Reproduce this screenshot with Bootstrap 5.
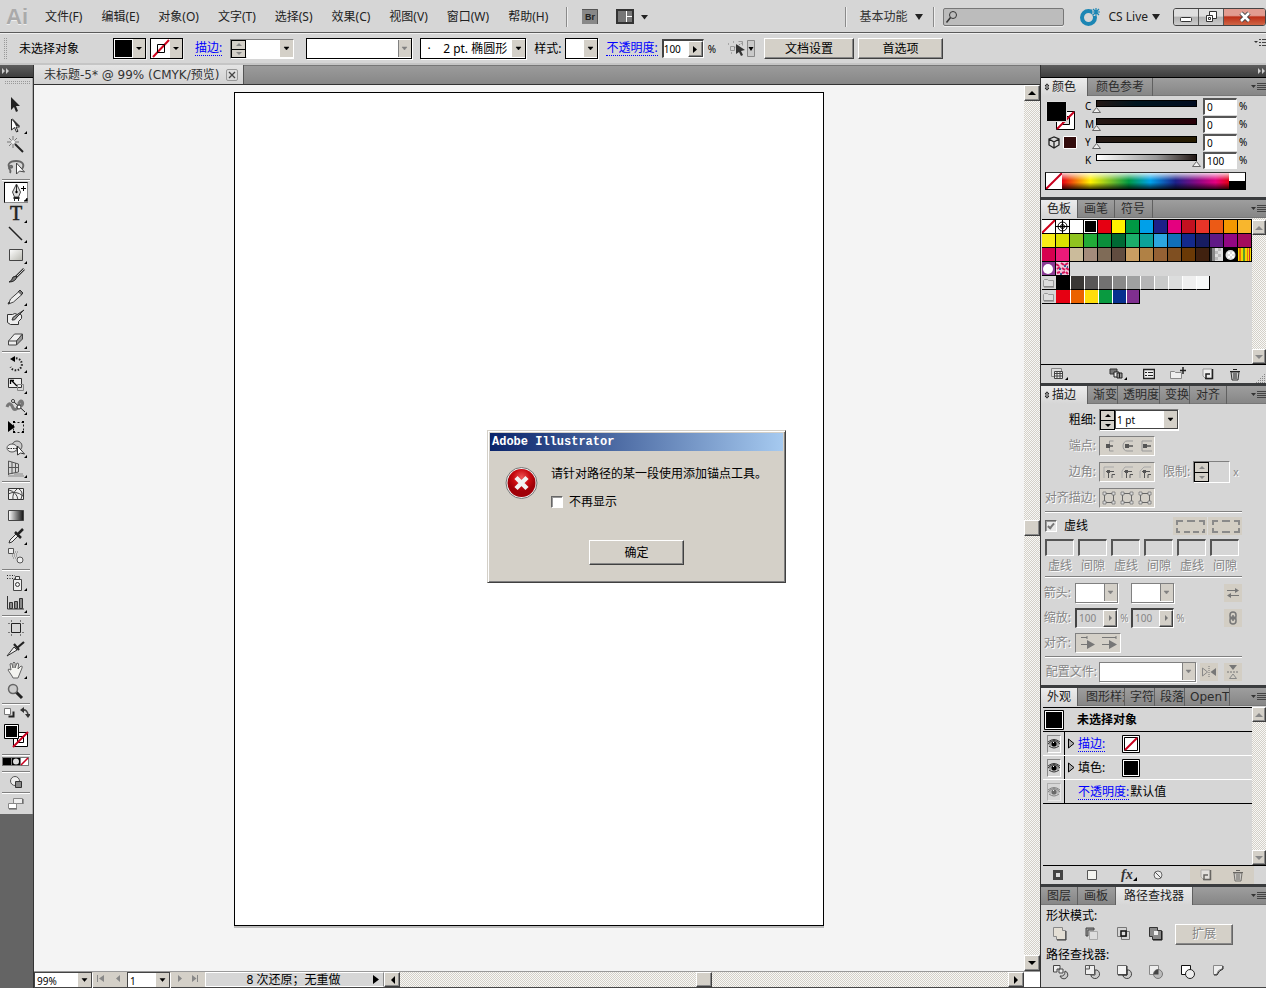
<!DOCTYPE html>
<html lang="zh-CN">
<head>
<meta charset="utf-8">
<meta name="viewport" content="width=device-width, initial-scale=1">
<title>Adobe Illustrator</title>
<link rel="stylesheet" href="https://cdn.jsdelivr.net/npm/bootstrap@5.3.0/dist/css/bootstrap.min.css">
<style>
:root{--face:#d4d0c8;--bg:#d6d6d6;--dark:#3a3c3e;
--arrow:url("data:image/svg+xml,%3Csvg xmlns='http://www.w3.org/2000/svg' width='13' height='17'%3E%3Cpath fill='%23d4d0c8' d='M0 0h13v17H0z'/%3E%3Cpath d='M4 7h5L6.500 10z' stroke='%23000' stroke-width='.5'/%3E%3C/svg%3E");
--arrow-off:url("data:image/svg+xml,%3Csvg xmlns='http://www.w3.org/2000/svg' width='13' height='17'%3E%3Cpath fill='%23d4d0c8' d='M0 0h13v17H0z'/%3E%3Cpath fill='none' stroke='%23808080' d='M.5-1v19'/%3E%3Cpath fill='%23808080' d='M4 7h5L6.500 10z' stroke='%23808080' stroke-width='.5'/%3E%3C/svg%3E")}
body{font:12px/16px "Noto Sans","Noto Sans CJK SC",sans-serif;color:#000;background:var(--bg);overflow:hidden}
svg{display:block;flex:none}
button,input,select{font:inherit;color:inherit;margin:0;padding:0;border:0;border-radius:0;background:none;min-width:0}
button{display:flex;align-items:center;justify-content:center}
.app-line{height:34px;border-bottom:1px solid #f0f0f0;box-shadow:inset 0 -1px #5a5a5a}
.menu-line a{color:#222;text-decoration:none}
.menu-line .menus{gap:19px}
.menu-line .tail{gap:14px;margin-left:18px}
.logo{width:32px;margin:0 -1px 0 6px;font:bold 22px/28px "Liberation Sans",sans-serif;color:#aaa;text-shadow:0 1px #eee}
.vsep{width:2px;height:20px;background:#8a8a8a;border-right:1px solid #eee}
.workspace{color:#333;margin-right:10px}
.live{color:#222;margin-right:13px}
.search-box{width:121px;height:18px;border:1px solid #777;border-radius:2px;background:#bcbcbc;box-shadow:0 1px #eee}
.search-box input{flex:1}
.winbtn{border:1px solid #444;border-radius:3px;height:18px;width:93px;overflow:hidden}
.winbtn button{width:25px;height:16px;background:linear-gradient(#dedede 45%,#b0b0b0 50%,#ccc);border-right:1px solid #555}
.winbtn .xclose{width:41px;border:0;background:linear-gradient(#e29c90 40%,#bd3018 50%,#cf6545)}
.ctl-line{height:31px;border-bottom:2px solid #c5c5c5;padding-left:3px}
.grip-dots{background:conic-gradient(#999 90deg,transparent 0) 0 0/2px 2px}
.ctl-line .grip-dots{width:4px;height:21px}
.ctl-line .target{margin-right:34px}
.slink,.slink:hover{color:#00f;text-decoration:none;border-bottom:1px dotted #00f;line-height:14px}
.field,.pick{border:1px solid #000;background-color:#fff;box-shadow:1px 1px #fff}
.pick{appearance:none;background-image:var(--arrow);background-repeat:no-repeat;background-position:right center}
.pick.off,.pick:disabled{background-image:var(--arrow-off);opacity:1}
.pick:disabled{border-color:#808080}
.ctl-line .pick{height:21px;border-width:1px}
.chip{width:33px;height:21px;border:1px solid #000;background:#fff;box-shadow:1px 1px #eee}
.chip svg{margin:auto}
.bevel{background:var(--face);border:1px solid;border-color:#fff #404040 #404040 #fff;box-shadow:inset -1px -1px #888;color:#000;border-radius:0}
.btn.bevel{--bs-btn-font-size:12px;--bs-btn-padding-x:0;--bs-btn-padding-y:0;line-height:16px;height:21px;justify-content:center;display:flex;--bs-btn-hover-bg:var(--face)}
.btn.bevel:disabled{opacity:1;color:#858585;text-shadow:1px 1px #fff;background:var(--face);border-color:#fff #666 #666 #fff}
.sunk{border:1px solid #808080;border-right-color:#fff;border-bottom-color:#fff}
.w33{width:33px}.w106{width:106px}.w64{width:64px}.w42{width:42px}
.small-t{font-size:10px}
.toolbox{width:34px;background:#646464;border-right:1px solid #333}
.dark-strip{height:13px;background:linear-gradient(#5e5e5e,#3e3e3e);border-bottom:1px solid #000;flex:none}
.toolset{background:var(--bg);padding:16px 0 2px;border-right:1px solid #aaa}
.toolset .grip-dots{height:4px;width:26px;margin:-13px 0 9px 4px}
.tool{width:24px;height:21px;margin-left:4px}
.tool.low{height:17px}
.tool.active{background:#fff;border:1px solid #000;border-right-color:#888;border-bottom-color:#888}
.tool.active svg{margin:-1px}
.tsep{height:4px;padding:1px 2px}
.tsep::after{content:"";display:block;height:2px;background:#808080;border-bottom:1px solid #fff}
.doc-tabs{height:20px;background:linear-gradient(#9c9c9c,#878787);border-bottom:1px solid #333;box-shadow:inset 0 1px #777}
.doc-tab{padding:0 5px 0 10px;gap:7px;background:linear-gradient(#e4e4e4,#d2d2d2);border-right:1px solid #555;color:#333;font-family:"DejaVu Sans","Noto Sans CJK SC",sans-serif}
.doc-tab button{width:12px;height:12px;border:1px solid #999;border-radius:2px}
.stage{background:#f4f4f4;padding:7px 0 45px;min-height:0}
.artboard{height:100%;aspect-ratio:590/834;border:1px solid #000;background:#fff;box-shadow:0 2px #bbb}
.track{background:repeating-conic-gradient(#f8f8f6 0 25%,#d4d0c8 0 50%) 0 0/2px 2px}
.vbar{width:16px}.vbar button{width:16px;height:16px}
.vbar.slim,.vbar.slim button{width:14px}
.docfoot{height:17px;border-bottom:1px solid #444;background:var(--face);border-top:1px solid #999}
.docfoot .pick{font-size:10px;height:16px;border:1px solid #444;padding-left:2px}
.docfoot .bevel{height:15px;width:16px}
.status{width:179px;height:15px;padding-left:10px;background:var(--bg);border:1px solid #fff;border-right-color:#888}
.dock{width:226px;border-left:1px solid #333;background:var(--bg)}
.pgroup{border-bottom:3px solid #3a3c3e}
.ptabs{height:18px;background:linear-gradient(#9e9e9e,#858585);box-shadow:inset 0 -1px #777;flex-wrap:nowrap}
.ptab{height:18px;padding:0 6px;border-right:1px solid #606060;color:#2c2c2c;white-space:nowrap;overflow:hidden;justify-content:flex-start}
.ptab.on{background:linear-gradient(#ececec,#d6d6d6);color:#222}
.ptab.cut{padding:0 0 0 5px}
.ptab.w47{width:47px;padding:0 0 0 8px}
.ptab.wide{padding-right:7px}
.ptab.lead-tab{padding:0 11px 0 3px;gap:2px}
.num{width:34px;height:17px;border:2px solid #555;border-right:1px solid #fff;border-bottom:1px solid #fff;background:#fff;padding-left:2px;font-size:10px}
.slide{appearance:none;width:109px;height:13px;background:var(--g) 5px 1px/calc(100% - 10px) 5px no-repeat,linear-gradient(#000,#000) 4px 0/calc(100% - 8px) 7px no-repeat}
.slide::-webkit-slider-thumb{appearance:none;width:9px;height:6px;margin-top:7px;background:url("data:image/svg+xml,%3Csvg xmlns='http://www.w3.org/2000/svg' width='9' height='6'%3E%3Cpath d='M.5 5.500 4.500.5l4 5z' fill='%23eee' stroke='%23666'/%3E%3C/svg%3E")}
.gc{--g:linear-gradient(90deg,#231815,#001620 40%,#000c20)}
.gm{--g:linear-gradient(90deg,#231815,#280008)}
.gy{--g:linear-gradient(90deg,#231815,#261b00)}
.gk{--g:linear-gradient(90deg,#fff,#999 60%,#231815)}
.crow{height:18px;font-size:10px;gap:2px}
.spectrum{margin:0 20px 7px 4px;height:18px;border:1px solid #000;border-top-color:#333}
.rainbow{background:linear-gradient(rgba(255,255,255,.8),transparent 45%,transparent 60%,rgba(0,0,0,.75)),linear-gradient(90deg,#e60012,#fff100 17%,#5cb531 32%,#009944 40%,#00a0e9 53%,#1d2088 68%,#920783 82%,#e4007f 92%,#e60012)}
.swatches{height:147px;border-bottom:1px solid #000}
.swgrid{padding:1px 0 0 1px}
.swgrid>:first-child{height:15px;border-top:1px solid #000}
.swrow{height:14px}
.sw{width:14px;height:14px;border:solid #000;border-width:0 1px 1px 0}
.swrow.light .sw+.sw+.sw{border-left:1px solid #fff}.swrow.light .sw:not(:last-child){border-right-width:0}
.pfoot{height:18px;padding:0 0 0 10px}
.pfoot.fx-bar{height:19px;border-top:1px solid #000;margin-left:2px}
.off-t{color:#858585;text-shadow:1px 1px #fff}
.lab{width:54px;text-align:right;white-space:nowrap}
.srow{height:26px;padding-left:1px;gap:3px}
.trow{height:25px}
.trow .lab{width:30px;margin-right:4px}
.trow .pick,.trow .sunk{width:43px;height:20px}
.trow .sunk{border-width:2px 1px 1px 2px;border-top-color:#444;border-left-color:#444}
.pct{font-size:10px;width:13px;text-align:center}
.rule{height:2px;background:#808080;border-bottom:1px solid #fff;margin:0 24px 0 4px}
.triple{width:56px;height:20px;background:var(--face);border:1px solid #808080;border-right-color:#fff;border-bottom-color:#fff}
.flatb{background:#d3cec4;width:18px;height:18px}
.flatb.last{margin-right:24px}
.spin{width:15px;height:20px;border:1px solid #000}
.spin.low{height:18px}
.spin button{height:9px;width:13px;background:var(--face);font-size:0}
.spin.low button{height:8px}
.spin button+button{border-top:1px solid #000}
.dash{width:29px;height:17px;border:2px solid #555;border-right:1px solid #fff;border-bottom:1px solid #fff}
.chk{appearance:none;width:12px;height:12px;background:#fff;border:1px solid;border-color:#666 #fff #fff #666;box-shadow:inset 1px 1px #999;position:relative}
.chk:disabled{background:#e8e8e8}
.chk:checked::after{content:"";position:absolute;left:3px;top:1px;width:4px;height:7px;border:solid #777;border-width:0 2px 2px 0;transform:rotate(40deg)}
.applist{height:158px;border-top:1px solid #000}
.ahead{height:24px;border-bottom:1px solid #000}
.arow{height:24px;border-bottom:1px solid #fff;gap:1px}
.ahead span,.arow span,.arow a{padding-top:1px}
.eye{width:22px;height:23px;border-right:1px solid #000}
.eye i{width:14px;height:18px;border:1px solid #888;border-right-color:#fff;border-bottom-color:#fff;display:flex;align-items:center}
.dialog-win{position:absolute;left:487px;top:430px;width:299px;height:153px;background:var(--face);border:1px solid;border-color:var(--face) #404040 #404040 var(--face);box-shadow:inset 1px 1px #fff,inset -1px -1px #808080;padding:2px}
.dialog-cap{height:18px;background:linear-gradient(90deg,#0a246a,#a6caf0);color:#fff;font:bold 12px/18px "Liberation Mono",monospace;padding-left:2px}
.dialog-main{padding:15px 0 0 15px;gap:12px}
</style>
</head>
<body class="d-flex flex-column vh-100">
<svg width="0" height="0" class="position-absolute" aria-hidden="true"><defs>
<symbol id="dn" viewBox="0 0 8 6"><path d="M0 0h8L4 6z"/></symbol>
<symbol id="eyeball" viewBox="0 0 12 10"><path d="M0 5q6-7 12 0-6 6-12 0z" fill="#999"/><path d="M0 5q6-7 12 0M1 7q5 4 10 0M0 3q6-5 12 0" fill="none" stroke="#333"/><circle cx="6" cy="5" r="2.500" fill="#000"/><path d="M5 3h1v1H5z" fill="#fff"/></symbol>
<symbol id="pmenu" viewBox="0 0 15 9"><path d="M0 2h5L2.500 5z" fill="#333"/><path d="M6 .5h9M6 2.500h9M6 4.500h9M6 6.500h9" stroke="#444"/></symbol>
<symbol id="ud" viewBox="0 0 6 8"><path d="M1 3 3 .8 5 3zM1 5l2 2.200L5 5z" fill="none" stroke="#222"/></symbol>
<symbol id="fold" viewBox="0 0 13 13"><path d="M1.500 10.500v-6l1-1h3l1 1h5v6z" fill="#ddd" stroke="#999"/><path d="M2 11h10" stroke="#777"/></symbol>
<symbol id="newi" viewBox="0 0 12 12"><path d="M1 1h9v10H4L1 8z" fill="#eee" stroke="#999"/><path d="M10.500 1v9.500H3M4 10V6h4" fill="none" stroke="#222" stroke-width="1.500"/></symbol>
<symbol id="bin" viewBox="0 0 12 13"><path d="M2 4h8l-1 8H3z" fill="#ccc" stroke="#333"/><path d="M1 3.500h10M4 1.500h4M5 5v6M7 5v6" stroke="#222" fill="none"/></symbol>
<linearGradient id="lg"><stop stop-color="#fff"/><stop offset="1" stop-color="#111"/></linearGradient>
<linearGradient id="lm" x2="1" y2="1"><stop stop-color="#fff"/><stop offset="1" stop-color="#b8b8b0"/></linearGradient>
<radialGradient id="rd" cy=".3"><stop stop-color="#e55"/><stop offset=".6" stop-color="#c80a10"/><stop offset="1" stop-color="#a00008"/></radialGradient>
</defs></svg>

<header class="app-line menu-line d-flex align-items-center flex-shrink-0">
  <span class="logo">Ai</span>
  <nav class="menus d-flex ms-1 ps-1">
    <a href="#">文件(F)</a><a href="#">编辑(E)</a><a href="#">对象(O)</a><a href="#">文字(T)</a><a href="#">选择(S)</a><a href="#">效果(C)</a><a href="#">视图(V)</a><a href="#">窗口(W)</a><a href="#">帮助(H)</a>
  </nav>
  <div class="tail d-flex align-items-center">
  <span class="vsep"></span>
  <button class="me-1" aria-label="Bridge"><svg width="16" height="15"><rect width="16" height="15" fill="#888"/><path d="M0 .5h15.500V15" fill="none" stroke="#555"/><text x="3" y="11" font-size="9" font-weight="bold" font-family="Liberation Sans" fill="#222">Br</text></svg></button>
  <button class="gap-1" aria-label="排列文档"><svg width="18" height="15"><path d="M1 1h16v13H1z" fill="#fff" stroke="#333" stroke-width="2"/><path d="M2 2h8v11H2zM11 2h5v5h-5zM11 8h5v5h-5z" fill="#777"/></svg><svg width="11" height="6" fill="#222"><path d="M3 1h7L6.500 5.500z"/></svg></button>
  </div>
  <div class="ms-auto d-flex align-items-center">
    <span class="vsep me-2"></span>
    <button class="workspace ms-1 gap-2">基本功能<svg width="8" height="6" fill="#222"><use href="#dn"/></svg></button>
    <span class="vsep me-2"></span>
    <label class="search-box d-flex align-items-center me-3"><svg width="16" height="16" fill="none" stroke="#333"><circle cx="9" cy="6" r="3.500"/><path d="m6.500 8.500-4 5" stroke-width="1.500"/></svg><input type="text" aria-label="搜索"></label>
    <button class="live gap-1"><svg width="20" height="20"><circle cx="8.500" cy="10.500" r="6.500" fill="none" stroke="#1c86b4" stroke-width="4"/><path d="M16 1v8M12 5h8M13 2l6 6M19 2l-6 6" stroke="#d6d6d6" stroke-width="2.500"/><path d="M16 1v8M12 5h8M13 2l6 6M19 2l-6 6" stroke="#1c86b4" stroke-width="1.200"/></svg><span class="ps-1">CS Live</span><svg width="8" height="6" fill="#222"><use href="#dn"/></svg></button>
    <div class="winbtn d-flex">
      <button aria-label="最小化"><svg width="13" height="12"><rect x=".5" y="6.500" width="11" height="4" rx="1" fill="#fff" stroke="#333"/></svg></button>
      <button aria-label="还原"><svg width="13" height="12" fill="#fff" stroke="#333"><path d="M4.500.5h7v7h-7z"/><path d="M1.500 4.500h6v6h-6zM3.500 6.500h2v2h-2z"/></svg></button>
      <button class="xclose" aria-label="关闭"><svg width="14" height="12"><path d="m3 2 8 8M11 2l-8 8" stroke="#444" stroke-width="4.500"/><path d="m3 2 8 8M11 2l-8 8" stroke="#fff" stroke-width="2.500"/></svg></button>
    </div>
  </div>
</header>

<div class="ctl-line d-flex align-items-center flex-shrink-0">
  <span class="grip-dots me-2"></span>
  <span class="target ms-1">未选择对象</span>
  <button class="chip d-flex me-1" aria-label="填色"><svg width="31" height="19"><path d="M1 1h17v17H1z"/><path d="M19 0h12v19H19z" fill="#d4d0c8"/><path d="M22 8h6l-3 3z"/></svg></button>
  <button class="chip d-flex me-2" aria-label="描边颜色"><svg width="31" height="19"><path d="M2 18 18 1" stroke="#d0021b" stroke-width="2"/><path d="M6.500 5.500h7v8h-7z" fill="none" stroke="#000"/><path d="M19 0h12v19H19z" fill="#d4d0c8"/><path d="M22 8h6l-3 3z"/></svg></button>
  <a class="slink ms-1 me-2" href="#">描边:</a>
  <div class="sunk d-flex w64 me-2 align-items-center">
    <div class="spin low flex-shrink-0"><button aria-label="加"><svg width="13" height="7"><path d="M4 5h6L7 2z" fill="#888"/></svg></button><button aria-label="减"><svg width="13" height="7"><path d="M4 2h6L7 5z" fill="#888"/></svg></button></div>
    <select class="pick flex-fill border-0" style="height:17px" aria-label="描边粗细"><option></option></select>
  </div>
  <select class="pick off w106 ms-1 me-2" aria-label="宽度配置"><option></option></select>
  <select class="pick w106 me-2" aria-label="画笔"><option>&nbsp; · &nbsp;&nbsp; 2 pt. 椭圆形</option></select>
  <label class="me-1" for="sty">样式:</label>
  <select id="sty" class="pick w33 me-2" aria-label="样式"><option></option></select>
  <a class="slink me-1" href="#">不透明度:</a>
  <span class="d-flex w42" style="height:19px;border:2px solid #444;border-right:1px solid #fff;border-bottom:1px solid #fff"><input value="100" aria-label="不透明度" class="small-t flex-fill bg-white w-50"><button class="bevel" style="width:15px" aria-label="更多"><svg width="6" height="7"><path d="M1 0v7l4-3.500z"/></svg></button></span>
  <span class="small-t ps-1">%</span>
  <button class="mx-2 ps-1" aria-label="选择类似"><svg width="28" height="19"><path d="M2.500 7.500h4v4h-4zM10.500 2.500h4v4" fill="none" stroke="#999"/><path d="M0 5h2M6 9l8-5M5 3h1M3 14h2" stroke="#777" stroke-dasharray="1 1"/><path d="M8 5v10l3-2 2 4 2-1-2-4 4-1z" fill="#333"/><path d="M19.500 1.500h7v16h-7z" fill="#c9c9c9" stroke="#888"/><path d="M20.500 8h5L23 12z"/></svg></button>
  <button class="btn bevel" style="width:90px">文档设置</button>
  <button class="btn bevel ms-1" style="width:85px">首选项</button>
  <svg class="ms-auto align-self-start mt-1" width="12" height="10"><path d="M0 3h4L2 5z" fill="#333"/><path d="M5 1.500h2M8 1.500h4M5 4.500h2M8 4.500h4M5 7.500h2M8 7.500h4" stroke="#444"/></svg>
</div>

<div class="d-flex flex-fill" style="min-height:0">
<aside class="toolbox flex-shrink-0">
  <div class="dark-strip"><svg width="12" height="11"><path d="M2 3v6l3-3zM6 3v6l3-3z" fill="#ccc"/></svg></div>
  <div class="toolset">
    <div class="grip-dots"></div>
    <button class="tool" aria-label="选择"><svg width="24" height="21"><path d="M7 3v13l3-3 2 5 2-1-2-5h4z" fill="#222"/></svg></button>
    <button class="tool" aria-label="直接选择"><svg width="24" height="21"><path d="M7.500 4v11l3-2.500 2 4.500 1.500-.700-2-4.300h3.500z" fill="#fff" stroke="#222"/><path d="M12 11h4L8 3z" fill="#333"/><path d="M23 16v3h-3z"/></svg></button>
    <button class="tool" aria-label="魔棒"><svg width="24" height="21"><path d="M9 0v12M3 6h12M5 2l8 8M13 2 5 10" stroke="#777"/><circle cx="9" cy="6" r="2" fill="#eee"/><path d="m11 8 8 8" stroke="#222" stroke-width="2"/></svg></button>
    <button class="tool" aria-label="套索"><svg width="24" height="21" fill="none"><path d="M7 11c-5-2-2-7 5-7s9 4 6 8M7 11c3-1 0-4-2-1-1 3 3 2 1 6" stroke="#666" stroke-width="1.800"/><path d="M12.500 6v11l3-3 5 1z" fill="#fff" stroke="#444"/></svg></button>
    <div class="tsep"></div>
    <button class="tool active" aria-label="添加锚点"><svg width="24" height="21"><path d="M12.500 2 8.500 10l2 5h4l2-5z" fill="#ddd" stroke="#444"/><path d="M12.500 3v7M10.500 15v4M14.500 15v4" stroke="#222"/><path d="M9.500 16h6" stroke="#222" stroke-width="2"/><circle cx="12.500" cy="10" r="1.200"/><path d="M17 6.500h5M19.500 4v5M23 16v3h-3" stroke="#000"/></svg></button>
    <button class="tool" aria-label="文字"><svg width="24" height="21"><text x="6" y="17" font-family="Liberation Serif" font-size="20" fill="#222" stroke="#222" stroke-width=".5">T</text><path d="M23 17v3h-3z"/></svg></button>
    <button class="tool" aria-label="直线"><svg width="24" height="21"><path d="m5 3 13 13" stroke="#222" stroke-width="1.500"/><path d="M23 16v3h-3z"/></svg></button>
    <button class="tool" aria-label="矩形"><svg width="24" height="21"><path d="M5.500 4.500h13v11h-13z" fill="url(#lm)" stroke="#444"/><path d="M23 16v3h-3z"/></svg></button>
    <button class="tool" aria-label="画笔"><svg width="24" height="21"><path d="m20 3-8 8" stroke="#333" stroke-width="2.500"/><path d="m20 3-7 7" stroke="#ccc"/><path d="M13 10q-1 6-8 6 3-1 4-5z" fill="#777" stroke="#222"/></svg></button>
    <button class="tool" aria-label="铅笔"><svg width="24" height="21"><path d="m4.500 17 2-5 9-8 3 3-9 8z" fill="#eee" stroke="#444"/><path d="m14 5 2-2 3 3-2 2M4 17l2-1-1-1z" fill="#777" stroke="#333"/><path d="M23 16v3h-3z"/></svg></button>
    <button class="tool" aria-label="斑点画笔"><svg width="24" height="21"><path d="M3.500 6.500h5q2-2 5 0 5-2 4 4l-3 3v3h-8l-3-2z" fill="#eee" stroke="#333"/><path d="m20 2-7 7q-2 4-5 3 1-4 3-4z" fill="#999" stroke="#333"/></svg></button>
    <button class="tool" aria-label="橡皮擦"><svg width="24" height="21"><path d="m4.500 12 6-7h8l-6 7v4h-8z" fill="#eee" stroke="#444"/><path d="M4.500 12h8v4l6-6V5l-6 7" fill="#999" stroke="#444"/><path d="M23 17v3h-3z"/></svg></button>
    <div class="tsep"></div>
    <button class="tool" aria-label="旋转"><svg width="24" height="21"><path d="M9 5a6 6 0 1 1-2.500 8" fill="none" stroke="#222" stroke-width="2" stroke-dasharray="1.500 1.500"/><path d="m6 5 5-3v6z"/><path d="M23 16v3h-3z"/></svg></button>
    <button class="tool" aria-label="比例缩放"><svg width="24" height="21"><path d="M4.500 3.500h13v9h-13z" fill="#eee" stroke="#333"/><path d="M13.500 9.500h6v6h-6z" fill="none" stroke="#888"/><path d="m7 5 6 6M6.500 9V5.500H10" stroke="#000" stroke-width="1.300" fill="none"/><path d="M23 16v3h-3z"/></svg></button>
    <button class="tool" aria-label="宽度"><svg width="24" height="21"><path d="M3 11c2-6 5-2 6 1 2 4 7-1 6-5 3-5 5 1 2 3" fill="none" stroke="#777" stroke-width="3"/><path d="m9 5 12 11" stroke="#222"/><circle cx="9" cy="5" r="1.500" fill="#fff" stroke="#333"/><circle cx="15" cy="11" r="2" fill="#fff" stroke="#333"/><path d="M23 16v3h-3z"/></svg></button>
    <button class="tool" aria-label="自由变换"><svg width="24" height="21"><path d="M9.500 5.500h10v10h-10z" fill="none" stroke="#222" stroke-dasharray="2 2"/><path d="M9 4h2v2H9zM18 4h2v2h-2zM18 14h2v2h-2zM9 14h2v2H9zM4 4v11l7-5z"/></svg></button>
    <button class="tool" aria-label="形状生成器"><svg width="24" height="21"><circle cx="13" cy="8" r="5" fill="#ccc" stroke="#555"/><ellipse cx="8" cy="10" rx="5" ry="4" fill="#eee" stroke="#555"/><path d="M4 10.500h9" stroke="#222" stroke-dasharray="1.500 1"/><path d="M13.500 8v9l3-2 4 1z" fill="#fff" stroke="#333"/><path d="M23 17v3h-3z"/></svg></button>
    <button class="tool" aria-label="透视网格"><svg width="24" height="21"><path d="M4.500 2v14M4.500 2l10 3v8l-10 2M8 3v12M11.500 4v10M4.500 8.500h10" stroke="#555" fill="none"/><path d="M4 17h16M10 15h9" stroke="#888"/><path d="M23 16v3h-3z"/></svg></button>
    <div class="tsep"></div>
    <button class="tool" aria-label="网格"><svg width="24" height="21"><path d="M4.500 4.500h15v11h-15z" fill="#eee" stroke="#333"/><path d="M4 10q8-4 15 2M9 16q-1-7 4-11M5 6q8 2 9 10M15 5q5 3 2 10" fill="none" stroke="#444"/></svg></button>
    <button class="tool" aria-label="渐变"><svg width="24" height="21"><path d="M4.500 5.500h15v10h-15z" fill="url(#lg)" stroke="#444"/></svg></button>
    <button class="tool" aria-label="吸管"><svg width="24" height="21"><path d="m5 17 1-3 7-7 2 2-7 7z" fill="#eee" stroke="#333"/><path d="m11 6 6 6M14 8l5-5" stroke="#222" stroke-width="2.500"/><path d="M23 16v3h-3z"/></svg></button>
    <button class="tool" aria-label="混合"><svg width="24" height="21"><path d="M4.500 1.500h5v5h-5z" fill="#eee" stroke="#555"/><path d="M8 9h6M9 11h5M11 5h3M8 7h6" stroke="#777" stroke-dasharray="1 1"/><circle cx="16" cy="13" r="3" fill="#eee" stroke="#555"/></svg></button>
    <div class="tsep"></div>
    <button class="tool" aria-label="符号喷枪"><svg width="24" height="21"><path d="M9.500 7.500h8v11h-8zM11.500 4.500h4v3h-4z" fill="#eee" stroke="#444"/><circle cx="13.500" cy="12.500" r="2" fill="none" stroke="#333"/><path d="M3 3.500h8M3 6.500h8" stroke="#222" stroke-dasharray="1 1.500"/><path d="M23 16v3h-3z"/></svg></button>
    <button class="tool" aria-label="柱形图"><svg width="24" height="21"><path d="M3.500 3v13H20" stroke="#333" fill="none"/><path d="M5.500 9.500h3v6h-3zM10.500 8.500h3v7h-3zM15.500 5.500h3v10h-3z" fill="#888" stroke="#333"/><path d="M23 17v3h-3z"/></svg></button>
    <div class="tsep"></div>
    <button class="tool" aria-label="画板"><svg width="24" height="21"><path d="M7.500 5.500h9v9h-9z" fill="none" stroke="#222"/><path d="M4 5.500h2M18 5.500h2M4 14.500h2M18 14.500h2M7.500 2v2M16.500 2v2M7.500 16v2M16.500 16v2" stroke="#777"/></svg></button>
    <button class="tool" aria-label="切片"><svg width="24" height="21"><path d="m3 17 7-9 3 3z" fill="#eee" stroke="#333"/><path d="m10 5 5 6M13 9l7-6" stroke="#222" stroke-width="2.200"/><path d="M23 16v3h-3z"/></svg></button>
    <button class="tool" aria-label="抓手"><svg width="24" height="21"><path d="M8 16 4 10q0-2 3 0L6 4q1-1 2 0l1 4V3q1-2 2 0v5l2-5q2 0 1.500 2L14 9l3-3q2 0 1 2l-2 5-2 5H9z" fill="#f4f4f0" stroke="#666"/><path d="M23 16v3h-3z"/></svg></button>
    <button class="tool" aria-label="缩放"><svg width="24" height="21"><path d="m12 11 6 6" stroke="#222" stroke-width="3"/><circle cx="9" cy="8" r="4.500" fill="#ccc" stroke="#666" stroke-width="1.500"/></svg></button>
    <div class="tsep"></div>
    <div class="px-1"><svg width="26" height="47"><path d="M.5 2.500h6v6h-6z" fill="#fff" stroke="#777"/><path d="M4.500 10.500h5v-5" fill="none" stroke="#222" stroke-width="2"/><path d="M18 4q6-1 6 6" stroke="#444" stroke-width="1.500" fill="none"/><path d="m20 1-4 3 4 3zM21 8h6l-3 4z" fill="#333"/>
      <path d="M9.500 26.500h14v14h-14z" fill="#fff" stroke="#000"/><path d="M13.500 30.500h6v6h-6z" fill="none" stroke="#000"/><path d="m9 41 15-15" stroke="#c8001e" stroke-width="2"/><path d="M.5 18.500h14v14H.5z" fill="#fff" stroke="#000"/><path d="M2 20h11v11H2z"/></svg></div>
    <div class="tsep"></div>
    <div class="ps-1"><svg width="27" height="9" style="margin-left:-2px"><path d="M0 0h27v9H0z" fill="#777"/><path d="M1 1h8v7H1zM10 1h8v7h-8z"/><path d="M19 1h7v7h-7z" fill="#fff"/><circle cx="14" cy="4.500" r="3" fill="#ddd"/><path d="m19 8 7-7" stroke="#c8001e" stroke-width="1.500"/></svg></div>
    <div class="tsep mt-1"></div>
    <button class="tool low" aria-label="绘图模式"><svg width="24" height="17"><circle cx="11" cy="7" r="4.500" fill="#eee" stroke="#555"/><path d="M11.500 7.500h6v6h-6z" fill="#888" stroke="#333"/></svg></button>
    <div class="tsep"></div>
    <button class="tool low" aria-label="屏幕模式"><svg width="24" height="17"><path d="M9.500 3.500h9v5h-9z" fill="#eee" stroke="#888"/><path d="M4.500 8.500h8v5h-8z" fill="#fff" stroke="#888"/><path d="M5 14h8M19 4v5" stroke="#555"/></svg></button>
  </div>
</aside>

<main class="d-flex flex-column flex-fill" style="min-width:0">
  <div class="doc-tabs d-flex flex-shrink-0"><div class="doc-tab d-flex align-items-center"><span>未标题-5* @ 99% (CMYK/预览)</span><button aria-label="关闭文档"><svg width="8" height="8"><path d="m1 1 6 6M7 1 1 7" stroke="#444" stroke-width="1.300"/></svg></button></div></div>
  <div class="d-flex flex-fill" style="min-height:0">
    <div class="stage flex-fill d-flex justify-content-center"><div class="artboard"></div></div>
    <div class="vbar track d-flex flex-column justify-content-between">
      <button class="bevel" aria-label="向上"><svg width="8" height="4"><path d="M0 4h8L4 0z"/></svg></button>
      <button class="bevel" aria-label="滑块"></button>
      <button class="bevel" aria-label="向下"><svg width="8" height="4"><path d="M0 0h8L4 4z"/></svg></button>
    </div>
  </div>
  <div class="docfoot d-flex align-items-center flex-shrink-0">
    <select class="pick" style="width:58px;margin-right:5px" aria-label="缩放级别"><option>99%</option></select>
    <button aria-label="首项"><svg width="30" height="15" fill="#888"><path d="M0 3h1v7H0zM7 3v7L2 6.500zM23 3v7l-4-3.500z"/></svg></button>
    <select class="pick" style="width:43px" aria-label="画板导航"><option>1</option></select>
    <button class="ms-2" aria-label="末项"><svg width="27" height="15" fill="#888"><path d="M0 3v7l4-3.500zM14 3v7l4.500-3.500zM19 3h1v7h-1z"/></svg></button>
    <div class="status d-flex align-items-center"><span class="flex-fill text-center">8 次还原；无重做</span><svg width="12" height="10"><path d="M2 0v9l6-4.500z"/></svg></div>
    <button class="bevel" aria-label="向左"><svg width="5" height="8"><path d="M5 0v8L1 4z"/></svg></button>
    <div class="track flex-fill h-100 d-flex justify-content-center"><button class="bevel" aria-label="滑块"></button></div>
    <button class="bevel" aria-label="向右"><svg width="5" height="8"><path d="M0 0v8l4-4z"/></svg></button>
    <span class="vbar h-100 bg-white"></span>
  </div>
</main>

<aside class="dock flex-shrink-0 d-flex flex-column">
  <div class="dark-strip d-flex justify-content-end"><svg width="12" height="11"><path d="M4 3v6l3-3zM8 3v6l3-3z" fill="#ccc"/></svg></div>

  <section class="pgroup">
    <div class="ptabs nav align-items-center"><button class="ptab on lead-tab"><svg width="6" height="8"><use href="#ud"/></svg>颜色</button><button class="ptab px-2">颜色参考</button><svg class="ms-auto" width="15" height="9"><use href="#pmenu"/></svg></div>
    <div class="d-flex" style="height:76px;padding-top:1px">
      <svg width="40" height="74" class="ms-1"><path d="M11.500 14.500h18v18h-18z" fill="#fff" stroke="#000"/><path d="M17.500 19.500h7v8h-7z" fill="#ddd" stroke="#000"/><path d="m12 32 17-17" stroke="#c8001e" stroke-width="2"/><path d="M1.500 4.500h20v20h-20z" stroke="#ddd"/><path d="m4 42 5-2 5 2v6l-5 3-5-3zM4 42l5 3 5-3M9 45v6" fill="#ddd" stroke="#222" stroke-width="1.300"/><path d="M18.500 39.500h13v12h-13z" fill="#330c0c" stroke="#fff"/></svg>
      <div style="width:7px">
        <div class="crow d-flex align-items-center"><label for="c">C</label></div>
        <div class="crow d-flex align-items-center"><label for="m">M</label></div>
        <div class="crow d-flex align-items-center"><label for="y">Y</label></div>
        <div class="crow d-flex align-items-center"><label for="k">K</label></div>
      </div>
      <div class="flex-fill">
        <div class="crow d-flex align-items-center"><input id="c" type="range" class="slide gc" value="0"><input class="num" value="0" aria-label="C">%</div>
        <div class="crow d-flex align-items-center"><input id="m" type="range" class="slide gm" value="0"><input class="num" value="0" aria-label="M">%</div>
        <div class="crow d-flex align-items-center"><input id="y" type="range" class="slide gy" value="0"><input class="num" value="0" aria-label="Y">%</div>
        <div class="crow d-flex align-items-center"><input id="k" type="range" class="slide gk" value="100"><input class="num" value="100" aria-label="K">%</div>
      </div>
    </div>
    <div class="spectrum d-flex"><svg width="16" height="16"><path d="M0 0h16v16H0z" fill="#fff"/><path d="M0 16 16 0" stroke="#c8001e" stroke-width="2"/></svg><div class="rainbow flex-fill"></div><svg width="16" height="16"><path d="M0 0h16v8H0z" fill="#fff"/><path d="M0 8h16v8H0z"/></svg></div>
  </section>

  <section class="pgroup">
    <div class="ptabs nav align-items-center"><button class="ptab on">色板</button><button class="ptab">画笔</button><button class="ptab wide">符号</button><svg class="ms-auto" width="15" height="9"><use href="#pmenu"/></svg></div>
    <div class="d-flex swatches">
      <div id="swatches" class="swgrid flex-fill"></div>
      <div class="vbar slim track d-flex flex-column justify-content-between" style="padding-top:2px"><button class="bevel" style="height:15px" aria-label="向上"><svg width="8" height="4" fill="#888"><path d="M0 4h8L4 0z"/></svg></button><button class="bevel" style="height:15px" aria-label="向下"><svg width="8" height="4" fill="#888"><path d="M0 0h8L4 4z"/></svg></button></div>
    </div>
    <div class="pfoot d-flex align-items-center justify-content-between">
      <svg width="19" height="14"><path d="M.5 1.500h10v8H.5z" fill="#ddd" stroke="#888"/><path d="M3.500 4.500h8v7h-8zM3 6.500h9M3 9h9M6 4v8M9 4v8" fill="#eee" stroke="#444"/><path d="M17 10v3h-3z"/></svg>
      <svg width="19" height="14" class="ms-4"><path d="M1 2h7v5H1z" fill="#777" stroke="#333"/><path d="M5 5h5v5H5z" fill="#eee" stroke="#222"/><path d="M8 6h5v5H8zM10.500 6v5" stroke="#222" fill="#999"/><path d="M18 10v3h-3z"/></svg>
      <svg width="12" height="12"><path d="M.5 1.500h11v9H.5z" fill="#eee" stroke="#222" stroke-width="1.500"/><path d="M2 4.500h2M5 4.500h5M2 7.500h2M5 7.500h5" stroke="#222"/></svg>
      <svg width="17" height="14"><path d="M.5 11.500v-7h4l1 1h6v6z" fill="#eee" stroke="#888"/><path d="M13 0v7M10 3.500h6" stroke="#222" stroke-width="1.500"/></svg>
      <svg width="12" height="12"><use href="#newi"/></svg>
      <svg width="12" height="13"><use href="#bin"/></svg>
      <svg width="10" height="10" class="align-self-end"><path d="M0 9.500h10M2 7.500h8M4 5.500h6M6 3.500h4M8 1.500h2" stroke="#888" stroke-dasharray="1 1"/></svg>
    </div>
  </section>

  <section class="pgroup">
    <div class="ptabs nav align-items-center"><button class="ptab on lead-tab"><svg width="6" height="8"><use href="#ud"/></svg>描边</button><button class="ptab cut">渐变</button><button class="ptab cut">透明度</button><button class="ptab cut">变换</button><button class="ptab">对齐</button><svg class="ms-auto" width="15" height="9"><use href="#pmenu"/></svg></div>
    <div style="padding-top:3px">
      <div class="srow d-flex align-items-center"><label class="lab" for="wt">粗细:</label>
        <div class="d-flex sunk bg-white" style="width:80px"><div class="spin flex-shrink-0"><button aria-label="加"><svg width="13" height="7"><path d="M4 5h6L7 2z"/></svg></button><button aria-label="减"><svg width="13" height="7"><path d="M4 2h6L7 5z"/></svg></button></div><select id="wt" class="pick small-t flex-fill" style="height:19px;border-color:#444;padding-left:1px"><option>1 pt</option></select></div></div>
      <div class="srow d-flex align-items-center off-t"><span class="lab">端点:</span>
        <svg class="triple" viewBox="0 0 54 18"><path d="M9.500 4v10M9.500 14h4M9.500 4h4" stroke="#999" fill="none"/><path d="M33 4h-6a4 5 0 0 0 0 10h6M52 4H42v10h10" stroke="#999" fill="none"/><path d="M8 9h5M26 9h7M44 9h7" stroke="#555" stroke-width="1.500"/><path d="M6 7h4v4H6zM25 7h4v4h-4zM43 7h4v4h-4z" fill="#555"/></svg></div>
      <div class="srow d-flex align-items-center off-t"><span class="lab">边角:</span>
        <svg class="triple" viewBox="0 0 54 18"><path d="M4 15V4h10M22 15V8l3-4h8M40 15v-7l4-4h7" stroke="#aaa" fill="none"/><path d="M6 8.500h8M8.500 8v7M24 8.500h8M26.500 8v7M42 8.500h8M44.500 8v7M12 15v-3.500h3M30 15v-3.500h3M48 15v-3.500h3" stroke="#555" fill="none"/><path d="M7 7h3v3H7zM25 7h3v3h-3zM43 7h3v3h-3z" fill="#555"/></svg>
        <label for="lim" style="margin-left:5px">限制:</label><div class="d-flex sunk" style="width:37px"><div class="spin flex-shrink-0"><button disabled aria-label="加"><svg width="13" height="7"><path d="M4 5h6L7 2z" fill="#888"/></svg></button><button disabled aria-label="减"><svg width="13" height="7"><path d="M4 2h6L7 5z" fill="#888"/></svg></button></div><input id="lim" disabled class="flex-fill w-50"></div><span class="small-t">x</span></div>
      <div class="srow d-flex align-items-center off-t"><span class="lab">对齐描边:</span>
        <svg class="triple" viewBox="0 0 54 18" fill="none"><path d="M4.500 4.500h9v9h-9zM22.500 4.500h9v9h-9zM40.500 4.500h9v9h-9z" stroke="#666"/><path d="M3 3h3v3H3zM12 3h3v3h-3zM3 12h3v3H3zM12 12h3v3h-3zM21 3h3v3h-3zM30 3h3v3h-3zM21 12h3v3h-3zM30 12h3v3h-3zM39 3h3v3h-3zM48 3h3v3h-3zM39 12h3v3h-3zM48 12h3v3h-3z" fill="#ddd" stroke="#777" stroke-width=".8"/></svg></div>
      <div class="rule"></div>
      <div class="d-flex align-items-center" style="height:26px;margin:0 24px 0 4px"><input id="ds" class="chk" type="checkbox" checked disabled><label for="ds" class="ms-1 me-auto">&nbsp;虚线</label>
        <svg width="69" height="18" style="background:#d3cec4"><path d="M4 8V4h6M14 4h8M26 4h5v4M4 11v4h3M11 15h6M20 15h6M29 15h2v-3M45 4h-5v4M49 4h8M61 4h5v4M40 11v4h5M49 15h8M61 15h5v-4" fill="none" stroke="#8a8a8a" stroke-width="2"/><path d="M34.500 0v18" stroke="#ddd"/></svg></div>
      <div class="d-flex" style="gap:4px;margin-left:4px"><input disabled class="dash" aria-label="虚线 1"><input disabled class="dash" aria-label="间隙 1"><input disabled class="dash" aria-label="虚线 2"><input disabled class="dash" aria-label="间隙 2"><input disabled class="dash" aria-label="虚线 3"><input disabled class="dash" aria-label="间隙 3"></div>
      <div class="d-flex off-t align-items-center" style="gap:9px;margin-left:7px;height:20px"><span>虚线</span><span>间隙</span><span>虚线</span><span>间隙</span><span>虚线</span><span>间隙</span></div>
      <div class="rule" style="margin-bottom:2px"></div>
      <div class="trow d-flex align-items-center off-t"><span class="lab">箭头:</span><select disabled class="pick" aria-label="起点箭头"><option></option></select><span class="pct"></span><select disabled class="pick" aria-label="终点箭头"><option></option></select><button class="flatb last ms-auto" aria-label="互换"><svg width="14" height="12" stroke="#777" fill="#777"><path d="M1 3.500h9M4 8.500h9"/><path d="m9 1 4 2.500L9 6zM5 6 1 8.500 5 11z" stroke="none"/></svg></button></div>
      <div class="trow d-flex align-items-center off-t"><span class="lab">缩放:</span>
        <span class="d-flex sunk"><input disabled class="small-t w-50 flex-fill" style="padding-left:2px" value="100" aria-label="起点缩放"><button disabled class="bevel" style="width:14px" aria-label="更多"><svg width="5" height="6" fill="#777"><path d="M1 0v6l3-3z"/></svg></button></span><span class="pct">%</span>
        <span class="d-flex sunk"><input disabled class="small-t w-50 flex-fill" style="padding-left:2px" value="100" aria-label="终点缩放"><button disabled class="bevel" style="width:14px" aria-label="更多"><svg width="5" height="6" fill="#777"><path d="M1 0v6l3-3z"/></svg></button></span><span class="pct">%</span>
        <button class="flatb last ms-auto" aria-label="链接"><svg width="10" height="14" fill="none" stroke="#777" stroke-width="1.500"><rect x="2" y="1" width="6" height="7" rx="3"/><rect x="2" y="6" width="6" height="7" rx="3"/><path d="M5 4v6"/></svg></button></div>
      <div class="trow d-flex align-items-center off-t"><span class="lab">对齐:</span><svg style="width:46px" class="triple" viewBox="0 0 44 18"><path d="M5 3.500h6M26 3.500h14M11 2v3M40 2v3M5 10.500h8M26 10.500h8" stroke="#777" fill="none"/><path d="M11 6v9l8-4.500zM33 6v9l8-4.500z" fill="#777"/></svg></div>
      <div class="rule" style="margin-top:1px"></div>
      <div class="d-flex align-items-center off-t" style="height:27px;gap:2px"><label class="lab" style="width:56px" for="pf">配置文件:</label><select id="pf" disabled class="pick" style="width:97px;height:20px"><option></option></select><button class="flatb ms-auto me-1" aria-label="纵向翻转"><svg width="14" height="12"><path d="M.5 2v8l5-4z" fill="none" stroke="#888"/><path d="M14 2v8L8.500 6z" fill="#777"/><path d="M7 0v12" stroke="#777" stroke-dasharray="1 1"/></svg></button><button class="flatb last" aria-label="横向翻转"><svg width="12" height="14"><path d="M2 0h8L6 5z" fill="#777"/><path d="M2.500 13.500h7L6 9z" fill="none" stroke="#888"/><path d="M0 7h12" stroke="#777" stroke-dasharray="2 1"/></svg></button></div>
    </div>
  </section>

  <section class="pgroup">
    <div class="ptabs nav align-items-center"><button class="ptab on">外观</button><button class="ptab w47">图形样式</button><button class="ptab cut">字符</button><button class="ptab cut">段落</button><button class="ptab cut" style="font-family:'DejaVu Sans'">OpenT</button><svg class="ms-auto" width="15" height="9"><use href="#pmenu"/></svg></div>
    <div class="d-flex" style="margin:1px 0 0 2px">
      <div class="applist flex-fill">
        <div class="ahead d-flex align-items-center fw-bold"><svg width="20" height="20" style="margin-left:1px;margin-right:13px"><path d="M.5.5h19v19H.5z" fill="#fff" stroke="#000"/><path d="M2 2h16v16H2z"/></svg><span>未选择对象</span></div>
        <div class="arow d-flex align-items-center"><span class="eye d-flex align-items-center ps-1"><i><svg width="12" height="10"><use href="#eyeball"/></svg></i></span><svg width="11" height="11"><path d="M2.500 1v9L8 5.500z" fill="#aaa" stroke="#000"/></svg><a class="slink" href="#">描边:</a><svg width="18" height="18" class="ms-3"><path d="M.5.5h17v17H.5z" fill="#fff" stroke="#000"/><path d="M2.500 2.500h13v13h-13z" fill="none" stroke="#000"/><path d="M3 15 15 3" stroke="#c8001e" stroke-width="2"/></svg></div>
        <div class="arow d-flex align-items-center"><span class="eye d-flex align-items-center ps-1"><i><svg width="12" height="10"><use href="#eyeball"/></svg></i></span><svg width="11" height="11"><path d="M2.500 1v9L8 5.500z" fill="#aaa" stroke="#000"/></svg><span>填色:</span><svg width="18" height="18" class="ms-3"><path d="M.5.5h17v17H.5z" fill="#fff" stroke="#000"/><path d="M2 2h14v14H2z"/></svg></div>
        <div class="arow d-flex align-items-center" style="border-color:#000"><span class="eye d-flex align-items-center ps-1"><i class="opacity-50"><svg width="12" height="10"><use href="#eyeball"/></svg></i></span><svg width="11" height="11"></svg><a class="slink" href="#">不透明度:</a><span>默认值</span></div>
      </div>
      <div class="vbar slim track d-flex flex-column justify-content-between"><button class="bevel" style="height:15px" aria-label="向上"><svg width="8" height="4" fill="#888"><path d="M0 4h8L4 0z"/></svg></button><button class="bevel" style="height:15px" aria-label="向下"><svg width="8" height="4" fill="#888"><path d="M0 0h8L4 4z"/></svg></button></div>
    </div>
    <div class="pfoot fx-bar d-flex align-items-center">
      <svg width="10" height="10"><path d="M0 0h10v10H0z" fill="#444"/><path d="M3 3h4v4H3z" fill="#ddd"/></svg>
      <svg width="10" height="10" class="ms-4"><path d="M.5.5h9v9h-9z" fill="#f4f4f0" stroke="#555"/></svg>
      <span class="ms-4" style="font:italic bold 14px/16px 'Liberation Serif',serif;color:#333">fx</span><svg width="4" height="12"><path d="M4 8v4H0z"/></svg>
      <svg width="10" height="10" class="mx-3" ><circle cx="5" cy="5" r="4" fill="#eee" stroke="#666"/><path d="m2 2 6 6" stroke="#555"/></svg>
      <div class="d-flex justify-content-around align-items-center ms-auto h-100" style="width:64px;background:#d3cec4;margin-right:12px"><svg width="12" height="12" opacity=".6"><use href="#newi"/></svg><svg width="12" height="13" opacity=".6"><use href="#bin"/></svg></div>
    </div>
  </section>

  <section class="flex-fill" style="border-bottom:1px solid #444">
    <div class="ptabs nav align-items-center"><button class="ptab">图层</button><button class="ptab wide">画板</button><button class="ptab on px-2">路径查找器</button><svg class="ms-auto" width="15" height="9"><use href="#pmenu"/></svg></div>
    <div style="padding:3px 0 0 5px">
      <div>形状模式:</div>
      <div class="d-flex align-items-center" style="height:20px;gap:18px;padding-left:7px">
        <svg width="14" height="14"><path d="M.5.5h9v3h3v9h-9v-3h-3z" fill="#e4dfd5" stroke="#888"/><path d="M13 4v9H4" stroke="#333" fill="none"/></svg>
        <svg width="14" height="14"><path d="M4.500 4.500h8v8h-8z" fill="#ddd" stroke="#aaa"/><path d="M1 9V1h8v2H3v6z" fill="#999" stroke="#444"/></svg>
        <svg width="14" height="14" fill="none"><path d="M.5.5h9v9h-9zM4.500 4.500h8v8h-8z" stroke="#777"/><path d="M4 4h5v5H4z" fill="#ddd" stroke="#111" stroke-width="1.500"/></svg>
        <svg width="14" height="14"><path d="M.5.5h8v3h4v9h-9v-3h-3z" fill="#888" stroke="#333"/><path d="M5 4h4v4H5z" fill="#eee"/><path d="M13 4v9H4" stroke="#111" fill="none"/></svg>
        <button class="btn bevel" disabled style="width:58px;margin-left:-6px">扩展</button>
      </div>
      <div style="margin-top:3px">路径查找器:</div>
      <div class="d-flex align-items-center" style="height:18px;gap:16px;padding-left:7px">
        <svg width="16" height="15"><path d="M.5 7V.5H7V4H4v3zM6 4h4v4H6z" fill="#eee" stroke="#444"/><path d="M12 6a4 4 0 1 1-5 5q5 1 5-5" fill="#ccc" stroke="#444"/></svg>
        <svg width="16" height="15"><path d="M10 5h2a4.500 4.500 0 1 1-6 6v-1h4z" fill="#ccc" stroke="#444"/><path d="M.5.5h9v9h-9zM.500 4h4V0" fill="#eee" stroke="#555"/></svg>
        <svg width="16" height="15"><path d="M10 5h2a4.500 4.500 0 1 1-6 6v-1h4z" fill="#ccc" stroke="#444"/><path d="M.5.5h9v9h-9z" fill="#f4f4f4" stroke="#666"/><path d="M10 1v9H1" fill="none" stroke="#222"/></svg>
        <svg width="16" height="15"><path d="M.5.5h9v9h-9z" fill="#eee" stroke="#888"/><circle cx="9" cy="9" r="4.500" fill="#bbb" stroke="#777"/><path d="M9.500 4.500v5h-5q1-5 5-5z" fill="#444"/></svg>
        <svg width="16" height="15"><path d="M.5.5h9v9h-9z" fill="#fff" stroke="#111"/><circle cx="9" cy="9" r="4.500" fill="#eee" stroke="#222"/></svg>
        <svg width="16" height="15"><path d="M.5.5h9v3q-5 1-6 6h-3z" fill="#eee" stroke="#888"/><path d="M10 1v3q-4 1-6 6H1" fill="none" stroke="#222"/></svg>
      </div>
    </div>
  </section>
</aside>
</div>

<div class="dialog-win" role="dialog" aria-label="Adobe Illustrator">
  <div class="dialog-cap">Adobe Illustrator</div>
  <div class="dialog-main d-flex">
    <svg width="34" height="34"><circle cx="16.500" cy="17" r="15.500" fill="#eee" stroke="#777"/><circle cx="16.500" cy="17" r="14" fill="url(#rd)"/><path d="m11 11.500 11 11M22 11.500l-11 11" stroke="#f2f2f2" stroke-width="4.500"/></svg>
    <div><div class="text-nowrap">请针对路径的某一段使用添加锚点工具。</div>
    <div class="d-flex align-items-center" style="padding-top:12px"><input type="checkbox" class="chk" id="again"><label for="again" style="margin-left:6px">不再显示</label></div></div>
  </div>
  <div class="d-flex justify-content-center" style="margin-top:30px"><button class="btn bevel" style="width:95px;height:25px">确定</button></div>
</div>

<script>
// Swatch rows: plain colours, or svg snippets for the special cells
const P = {
  none:'<path d="M0 0h13v13H0z" fill="#fff"/><path d="M0 13 13 0" stroke="#d0021b" stroke-width="2"/>',
  reg:'<path d="M0 0h13v13H0z" fill="#fff"/><circle cx="6.500" cy="6.500" r="4.500" fill="none" stroke="#000"/><circle cx="6.500" cy="6.500" r="2" fill="none" stroke="#000"/><path d="M6.500 0v13M0 6.500h13" stroke="#000"/>',
  blk:'<path d="M0 0h13v13H0z" fill="#fff"/><path d="M1 1h11v11H1z"/>',
  fade:'<path d="M0 0h13v13H0z" fill="#ddd"/><path d="M0 0h2v13H0z" fill="#333"/><path d="M2 0h3v13H2z" fill="#888"/><path d="M5 3h3v3H5zM8 0h3v3H8zM8 6h3v3H8zM5 9h3v3H5z" fill="#bbb"/>',
  ball:'<path d="M0 0h13v13H0z"/><circle cx="6.500" cy="7" r="5" fill="#ddd"/><path d="M4 4h2v2H4zM8 4h2v2H8zM6 6h2v2H6zM4 8h2v2H4zM8 8h2v2H8z" fill="#fff"/>',
  bars:'<path d="M0 0h13v13H0z" fill="#f5d800"/><path d="M1 0h2v13H1zM9 0h1v13H9z" fill="#e8730c"/><path d="M5 0h2v13H5z" fill="#5a9e2a"/><path d="M11 0h1v13h-1z" fill="#c33"/>',
  glow:'<path d="M0 0h13v13H0z" fill="#8a3a94"/><circle cx="6" cy="7" r="5" fill="#fff"/>',
  pat:'<path d="M0 0h13v13H0z" fill="#f0c8dc"/><path d="m0 2 3 2M5 1l3 2M9 3l3-2M1 7l3-2M6 6l3 2M10 6l3 2M1 11l3-1M6 11l3-1M10 10l2 2" stroke="#d4145a" stroke-width="2"/><path d="M3 7h2M8 4h2M4 12h2M11 5h1" stroke="#3a5a90" stroke-width="2"/>',
  dir:'<use href="#fold" width="13" height="13"/>'
};
const rows = [
 'none reg #fff blk #e60012 #fff100 #009944 #00a0e9 #1d2088 #e4007f #c31020 #e83428 #ec5a15 #f39800 #f8b62d',
 '#f9ec16 #dbe000 #8fc31f #22ac38 #0b8f3b #006934 #1bae6a #0ba29a #2ca6e0 #0f6fba #13298c #171c61 #601986 #920783 #a40b5d',
 '#d7004f #ea1a79 #cbbb9b #a48b7b #7f6b57 #614c3f #ca9e62 #b08145 #956134 #7f4f21 #6a3906 #40210f fade ball bars',
 'glow pat',
 'dir #000 #3a3735 #595757 #727171 #898989 #9fa0a0 #b5b5b6 #c9caca #dcdddd #efefef #f7f8f8',
 'dir #e60012 #eb6100 #fedd0a #099a40 #07308f #7f2f8f'];
document.getElementById('swatches').innerHTML = rows.map((r,i)=>
 `<div class="swrow d-flex${i>3?' light':''}">`+r.split(' ').map(c=>P[c]
  ? `<span class="sw"><svg width="13" height="13">${P[c]}</svg></span>`
  : `<span class="sw" style="background:${c}"></span>`).join('')+'</div>').join('');
</script>
<script src="https://cdn.jsdelivr.net/npm/bootstrap@5.3.0/dist/js/bootstrap.bundle.min.js"></script>
</body>
</html>
